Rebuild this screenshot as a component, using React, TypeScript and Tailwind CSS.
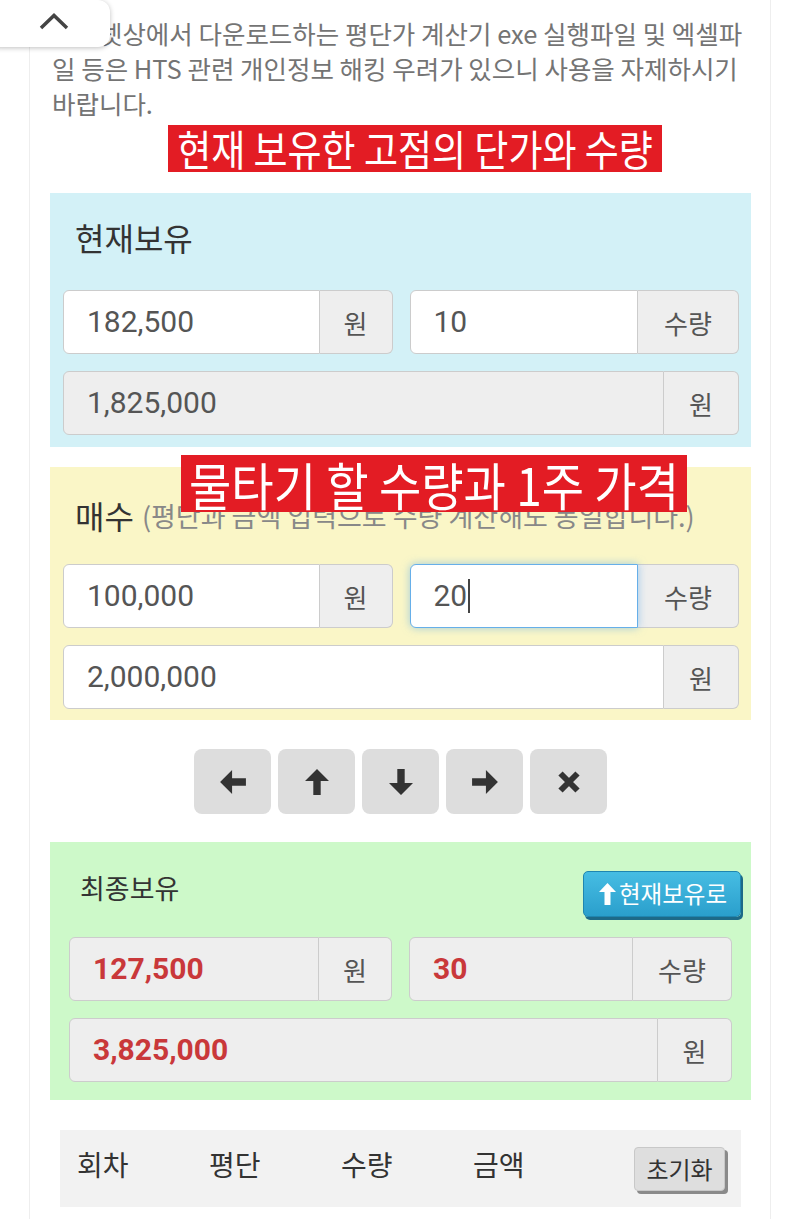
import React from "react";

const kr = "font-['Noto_Sans_CJK_KR','Noto_Sans',sans-serif]";
const num = "font-['Roboto','Noto_Sans_CJK_KR',sans-serif]";

type FieldProps = {
  value: string;
  unit: string;
  unitW: string;
  readOnly?: boolean;
  red?: boolean;
  focus?: boolean;
};

function Field({ value, unit, unitW, readOnly, red, focus }: FieldProps) {
  return (
    <div className="flex h-[64px] min-w-0">
      <div
        className={`relative flex min-w-0 flex-1 items-center rounded-l-[6px] border pl-[23px] ${
          focus
            ? "z-10 border-[#66afe9] shadow-[0_0_8px_rgba(102,175,233,0.6)]"
            : "border-[#cccccc]"
        } ${readOnly ? "bg-[#eeeeee]" : "bg-white"}`}
      >
        <span
          className={`${num} text-[30px] leading-none ${
            red ? "font-bold text-[#c9383a]" : "text-[#555555]"
          }`}
        >
          {value}
        </span>
        {focus && <span className="ml-[1px] h-[34px] w-[2px] bg-[#444444]" />}
      </div>
      <div
        className={`${unitW} flex shrink-0 items-center justify-center rounded-r-[6px] border border-l-0 border-[#cccccc] bg-[#eeeeee] text-[26px] text-[#555555]`}
      >
        {unit}
      </div>
    </div>
  );
}

function ArrowBtn({ children }: { children: React.ReactNode }) {
  return (
    <button className="flex h-[65px] w-[77px] items-center justify-center rounded-[8px] bg-[#dddddd]">
      {children}
    </button>
  );
}

export default function App() {
  return (
    <div className={`relative min-h-[1219px] w-[800px] overflow-hidden bg-white ${kr}`}>
      {/* floating scroll-up tab */}
      <div className="absolute left-[-12px] top-[0px] z-20 flex h-[47px] w-[122px] items-start rounded-[12px] bg-white pl-[51px] pt-[13px] shadow-[0_1px_5px_rgba(0,0,0,0.25)]">
        <svg width="30" height="17" viewBox="0 0 30 17" fill="none">
          <polyline points="2,15 15,2.5 28,15" stroke="#444444" strokeWidth="3.5" />
        </svg>
      </div>

      <div className="ml-[29px] min-h-[1219px] w-[742px] border-x border-[#eeeeee] pl-[20px] pr-[19px]">
        {/* notice */}
        <div className="pl-[2px] pt-[15px] text-[25.5px] leading-[35px] text-[#747474]">
          <div className="whitespace-nowrap">인터넷상에서 다운로드하는 평단가 계산기 exe 실행파일 및 엑셀파</div>
          <div className="whitespace-nowrap">일 등은 HTS 관련 개인정보 해킹 우려가 있으니 사용을 자제하시기</div>
          <div className="whitespace-nowrap">바랍니다.</div>
        </div>

        <div className="ml-[118px] mt-[5px] flex h-[47px] w-[494px] items-center justify-center bg-[#e31c24]">
          <span className="inline-block scale-y-[1.15] whitespace-nowrap text-[37px] leading-none text-white">
            현재 보유한 고점의 단가와 수량
          </span>
        </div>

        {/* 현재보유 */}
        <div className="mt-[21px] bg-[#d3f1f7] pb-[12px] pt-[25px]">
          <div className="h-[40px] pl-[25px] text-[32px] leading-[38px] text-[#333333]">현재보유</div>
          <div className="mt-[32px] pl-[13px] pr-[12px]">
            <div className="grid grid-cols-2 gap-[17px]">
              <Field value="182,500" unit="원" unitW="w-[73px]" />
              <Field value="10" unit="수량" unitW="w-[101px]" />
            </div>
            <div className="mt-[17px]">
              <Field value="1,825,000" unit="원" unitW="w-[75px]" readOnly />
            </div>
          </div>
        </div>

        {/* 매수 */}
        <div className="relative mt-[20px] bg-[#faf6c7] pb-[11px] pt-[28px]">
          <div className="absolute left-[131px] top-[-12px] z-10 flex h-[57px] w-[506px] items-center justify-center bg-[#e31c24]">
            <span className="inline-block scale-y-[1.12] whitespace-nowrap text-[46px] leading-none text-white">
              물타기 할 수량과 1주 가격
            </span>
          </div>
          <div className="flex h-[40px] items-center whitespace-nowrap pl-[25px]">
            <span className="text-[32px] leading-none text-[#333333]">매수</span>
            <span className="ml-[8px] text-[27px] leading-none text-[#888888]">(평단과 금액 입력으로 수량 계산해도 동일합니다.)</span>
          </div>
          <div className="mt-[29px] pl-[13px] pr-[12px]">
            <div className="grid grid-cols-2 gap-[17px]">
              <Field value="100,000" unit="원" unitW="w-[73px]" />
              <Field value="20" unit="수량" unitW="w-[101px]" focus />
            </div>
            <div className="mt-[17px]">
              <Field value="2,000,000" unit="원" unitW="w-[75px]" />
            </div>
          </div>
        </div>

        {/* arrow buttons */}
        <div className="mt-[29px] flex justify-center gap-[7px]">
          <ArrowBtn>
            <svg width="28" height="24" viewBox="0 0 28 26">
              <polygon points="0,13 13,0 13,9 28,9 28,17 13,17 13,26" fill="#333333" />
            </svg>
          </ArrowBtn>
          <ArrowBtn>
            <svg width="24" height="28" viewBox="0 0 26 28">
              <polygon points="13,0 26,13 17,13 17,28 9,28 9,13 0,13" fill="#333333" />
            </svg>
          </ArrowBtn>
          <ArrowBtn>
            <svg width="24" height="28" viewBox="0 0 26 28">
              <polygon points="13,28 26,15 17,15 17,0 9,0 9,15 0,15" fill="#333333" />
            </svg>
          </ArrowBtn>
          <ArrowBtn>
            <svg width="28" height="24" viewBox="0 0 28 26">
              <polygon points="28,13 15,0 15,9 0,9 0,17 15,17 15,26" fill="#333333" />
            </svg>
          </ArrowBtn>
          <ArrowBtn>
            <svg width="24" height="24" viewBox="0 0 24 24">
              <path d="M3.5 3.5 L20.5 20.5 M20.5 3.5 L3.5 20.5" stroke="#333333" strokeWidth="6" />
            </svg>
          </ArrowBtn>
        </div>

        {/* 최종보유 */}
        <div className="mt-[28px] bg-[#cdf9c9] pb-[18px] pt-[29px]">
          <div className="flex items-start justify-between pl-[30px] pr-[10px]">
            <div className="text-[27px] leading-[34px] text-[#333333]">최종보유</div>
            <button className="flex h-[46px] w-[158px] items-center gap-[3px] rounded-[5px] border border-[#1f86b0] bg-gradient-to-b from-[#46bde3] to-[#2a9fcc] pl-[15px] text-[23.5px] text-white shadow-[2px_3px_0_#1d6a88]">
              <svg width="17" height="22" viewBox="0 0 17 22" className="shrink-0">
                <polygon points="8.5,0 17,9 11.5,9 11.5,22 5.5,22 5.5,9 0,9" fill="#ffffff" />
              </svg>
              <span className="whitespace-nowrap leading-none">현재보유로</span>
            </button>
          </div>
          <div className="mt-[20px] px-[19px]">
            <div className="grid grid-cols-2 gap-[17px]">
              <Field value="127,500" unit="원" unitW="w-[73px]" readOnly red />
              <Field value="30" unit="수량" unitW="w-[99px]" readOnly red />
            </div>
            <div className="mt-[17px]">
              <Field value="3,825,000" unit="원" unitW="w-[74px]" readOnly red />
            </div>
          </div>
        </div>

        {/* history header */}
        <div className="mx-[10px] mt-[30px] flex h-[77px] items-center bg-[#f2f2f2] pl-[17px] pr-[16px] text-[28px] text-[#333333]">
          <div className="mb-[10px] flex">
            <div className="w-[132px]">회차</div>
            <div className="w-[132px]">평단</div>
            <div className="w-[132px]">수량</div>
            <div className="w-[132px]">금액</div>
          </div>
          <button className="ml-auto flex h-[44px] w-[91px] items-center justify-center rounded-[4px] border border-[#c8c8c8] bg-[#dedede] text-[24px] text-[#333333] shadow-[3px_3px_0_#8a8a8a]">
            초기화
          </button>
        </div>
      </div>
    </div>
  );
}
